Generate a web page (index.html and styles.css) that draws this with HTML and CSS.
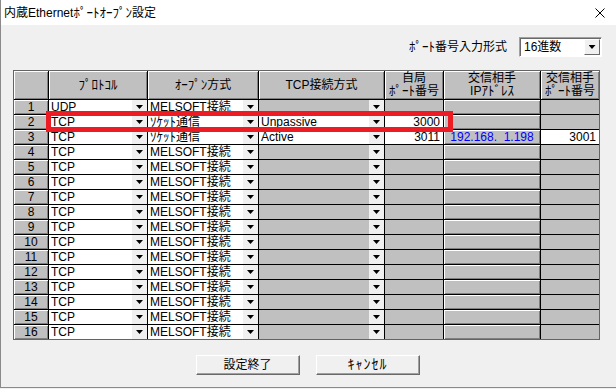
FILE: index.html
```html
<!DOCTYPE html>
<html lang="ja">
<head>
<meta charset="utf-8">
<title>内蔵Ethernetﾎﾟｰﾄｵｰﾌﾟﾝ設定</title>
<link rel="stylesheet" href="styles.css">
</head>
<body>
<div class="window">
  <div class="titlebar">
    <span class="title">内蔵Ethernet<span class="hk">ﾎﾟｰﾄｵｰﾌﾟﾝ</span>設定</span>
    <svg class="close" width="10" height="10" viewBox="0 0 10 10"><path d="M0.5 0.5L9.5 9.5M9.5 0.5L0.5 9.5" stroke="#000" stroke-width="1"/></svg>
  </div>
  <div class="client">
    <div class="format-row">
      <span class="label"><span class="hk">ﾎﾟｰﾄ</span>番号入力形式</span>
      <div class="combo"><span class="combo-text">16進数</span><i class="combo-btn"></i></div>
    </div>
    <div class="grid">
      <div class="hd"></div>
      <div class="hd"><span><span class="hk">ﾌﾟﾛﾄｺﾙ</span></span></div>
      <div class="hd"><span><span class="hk">ｵｰﾌﾟﾝ</span>方式</span></div>
      <div class="hd"><span>TCP接続方式</span></div>
      <div class="hd"><span>自局<br><span class="hk">ﾎﾟｰﾄ</span>番号</span></div>
      <div class="hd"><span>交信相手<br>IP<span class="hk">ｱﾄﾞﾚｽ</span></span></div>
      <div class="hd"><span>交信相手<br><span class="hk">ﾎﾟｰﾄ</span>番号</span></div>

      <div class="num">1</div><div class="cb"><span>UDP</span><i class="dd"></i></div><div class="cb"><span>MELSOFT接続</span><i class="dd"></i></div><div class="cb off"><span></span><i class="dd"></i></div><div class="gr"></div><div class="ip"></div><div class="gr"></div>
      <div class="num">2</div><div class="cb"><span>TCP</span><i class="dd"></i></div><div class="cb"><span><span class="hk">ｿｹｯﾄ</span>通信</span><i class="dd"></i></div><div class="cb"><span>Unpassive</span><i class="dd"></i></div><div class="wt">3000</div><div class="ip"></div><div class="gr"></div>
      <div class="num">3</div><div class="cb"><span>TCP</span><i class="dd"></i></div><div class="cb"><span><span class="hk">ｿｹｯﾄ</span>通信</span><i class="dd"></i></div><div class="cb"><span>Active</span><i class="dd"></i></div><div class="wt">3011</div><div class="ip">192.168.  1.198</div><div class="wt">3001</div>
      <div class="num">4</div><div class="cb"><span>TCP</span><i class="dd"></i></div><div class="cb"><span>MELSOFT接続</span><i class="dd"></i></div><div class="cb off"><span></span><i class="dd"></i></div><div class="gr"></div><div class="ip"></div><div class="gr"></div>
      <div class="num">5</div><div class="cb"><span>TCP</span><i class="dd"></i></div><div class="cb"><span>MELSOFT接続</span><i class="dd"></i></div><div class="cb off"><span></span><i class="dd"></i></div><div class="gr"></div><div class="ip"></div><div class="gr"></div>
      <div class="num">6</div><div class="cb"><span>TCP</span><i class="dd"></i></div><div class="cb"><span>MELSOFT接続</span><i class="dd"></i></div><div class="cb off"><span></span><i class="dd"></i></div><div class="gr"></div><div class="ip"></div><div class="gr"></div>
      <div class="num">7</div><div class="cb"><span>TCP</span><i class="dd"></i></div><div class="cb"><span>MELSOFT接続</span><i class="dd"></i></div><div class="cb off"><span></span><i class="dd"></i></div><div class="gr"></div><div class="ip"></div><div class="gr"></div>
      <div class="num">8</div><div class="cb"><span>TCP</span><i class="dd"></i></div><div class="cb"><span>MELSOFT接続</span><i class="dd"></i></div><div class="cb off"><span></span><i class="dd"></i></div><div class="gr"></div><div class="ip"></div><div class="gr"></div>
      <div class="num">9</div><div class="cb"><span>TCP</span><i class="dd"></i></div><div class="cb"><span>MELSOFT接続</span><i class="dd"></i></div><div class="cb off"><span></span><i class="dd"></i></div><div class="gr"></div><div class="ip"></div><div class="gr"></div>
      <div class="num">10</div><div class="cb"><span>TCP</span><i class="dd"></i></div><div class="cb"><span>MELSOFT接続</span><i class="dd"></i></div><div class="cb off"><span></span><i class="dd"></i></div><div class="gr"></div><div class="ip"></div><div class="gr"></div>
      <div class="num">11</div><div class="cb"><span>TCP</span><i class="dd"></i></div><div class="cb"><span>MELSOFT接続</span><i class="dd"></i></div><div class="cb off"><span></span><i class="dd"></i></div><div class="gr"></div><div class="ip"></div><div class="gr"></div>
      <div class="num">12</div><div class="cb"><span>TCP</span><i class="dd"></i></div><div class="cb"><span>MELSOFT接続</span><i class="dd"></i></div><div class="cb off"><span></span><i class="dd"></i></div><div class="gr"></div><div class="ip"></div><div class="gr"></div>
      <div class="num">13</div><div class="cb"><span>TCP</span><i class="dd"></i></div><div class="cb"><span>MELSOFT接続</span><i class="dd"></i></div><div class="cb off"><span></span><i class="dd"></i></div><div class="gr"></div><div class="ip"></div><div class="gr"></div>
      <div class="num">14</div><div class="cb"><span>TCP</span><i class="dd"></i></div><div class="cb"><span>MELSOFT接続</span><i class="dd"></i></div><div class="cb off"><span></span><i class="dd"></i></div><div class="gr"></div><div class="ip"></div><div class="gr"></div>
      <div class="num">15</div><div class="cb"><span>TCP</span><i class="dd"></i></div><div class="cb"><span>MELSOFT接続</span><i class="dd"></i></div><div class="cb off"><span></span><i class="dd"></i></div><div class="gr"></div><div class="ip"></div><div class="gr"></div>
      <div class="num">16</div><div class="cb"><span>TCP</span><i class="dd"></i></div><div class="cb"><span>MELSOFT接続</span><i class="dd"></i></div><div class="cb off"><span></span><i class="dd"></i></div><div class="gr"></div><div class="ip"></div><div class="gr"></div>

      <div class="highlight"></div>
    </div>
    <div class="buttons">
      <button class="btn">設定終了</button>
      <button class="btn"><span class="hk hk-btn">ｷｬﾝｾﾙ</span></button>
    </div>
  </div>
</div>
</body>
</html>
```

FILE: styles.css
```css
* { box-sizing: border-box; }

body {
  margin: 0;
  width: 616px;
  height: 389px;
  overflow: hidden;
  background: #f0f0f0;
  font-family: "Liberation Sans", "Noto Sans CJK JP", sans-serif;
  font-size: 12px;
  color: #000;
}

.hk {
  font-family: "Noto Sans CJK JP", sans-serif;
  font-size: 13px;
  line-height: 0;
}

.hk-btn {
  font-size: 14px;
  letter-spacing: 1px;
}

.window {
  height: 388px;
  display: flex;
  flex-direction: column;
  border-left: 1px solid #8a8a8a;
  border-bottom: 1px solid #8a8a8a;
}

.titlebar {
  height: 25px;
  flex: none;
  background: #fff;
  display: flex;
  align-items: center;
  justify-content: space-between;
  padding: 0 11px 0 3px;
}

.title { line-height: 14px; }

.close { display: block; }

.client {
  flex: 1;
  display: flex;
  flex-direction: column;
  padding: 12px 14px 0 12px;
}

.format-row {
  display: flex;
  justify-content: flex-end;
  align-items: center;
  gap: 12px;
  height: 20px;
}

.label { line-height: 14px; }

.combo {
  width: 83px;
  height: 20px;
  display: flex;
  background: #fff;
  border: 1px solid;
  border-color: #a0a0a0 #fff #fff #a0a0a0;
  box-shadow: inset 1px 1px #696969;
  padding: 1px;
}

.combo-text {
  flex: 1;
  line-height: 16px;
  padding-left: 3px;
}

.combo-btn {
  width: 16px;
  height: 16px;
  background: #f0f0f0;
  border: 1px solid;
  border-color: #fff #696969 #696969 #fff;
  display: flex;
  align-items: center;
  justify-content: center;
}

.combo-btn::after,
.dd::after {
  content: "";
  width: 7px;
  height: 4px;
  background: #000;
  clip-path: polygon(0 0, 100% 0, 50% 100%);
}

.grid {
  position: relative;
  margin-top: 13px;
  width: 587px;
  display: grid;
  grid-template-columns: 34px 98px 110px 125px 58px 96px 58px;
  grid-template-rows: 28px repeat(16, 14px);
  gap: 1px;
  background: #000;
  border: 1px solid #646464;
}

.hd, .num, .ip {
  background: #c0c0c0;
  box-shadow: inset 1px 1px #fff, inset -1px -1px #808080;
}

.hd {
  display: flex;
  align-items: center;
  justify-content: center;
  text-align: center;
  line-height: 13px;
}

.num {
  text-align: center;
  line-height: 14px;
}

.ip {
  text-align: center;
  line-height: 14px;
  color: #0000ff;
  white-space: pre;
}

.cb {
  display: flex;
  background: #fff;
  padding-left: 2px;
  line-height: 14px;
  white-space: nowrap;
}

.cb > span {
  flex: 1;
}

.cb.off { background: #c0c0c0; }

.dd {
  width: 15px;
  background: #f0f0f0;
  display: flex;
  align-items: center;
  justify-content: center;
}

.gr { background: #c0c0c0; }

.wt {
  background: #fff;
  text-align: right;
  padding-right: 3px;
  line-height: 14px;
}

.highlight {
  position: absolute;
  left: 32px;
  top: 40px;
  width: 407px;
  height: 21px;
  border: 5px solid #ed1c24;
}

.buttons {
  margin-top: 15px;
  display: flex;
  justify-content: center;
  gap: 16px;
}

.btn {
  width: 104px;
  height: 20px;
  padding: 0;
  background: #f0f0f0;
  border: 1px solid;
  border-color: #fff #696969 #696969 #fff;
  box-shadow: inset -1px -1px #a0a0a0;
  font: inherit;
  color: #000;
  line-height: 16px;
}
```
